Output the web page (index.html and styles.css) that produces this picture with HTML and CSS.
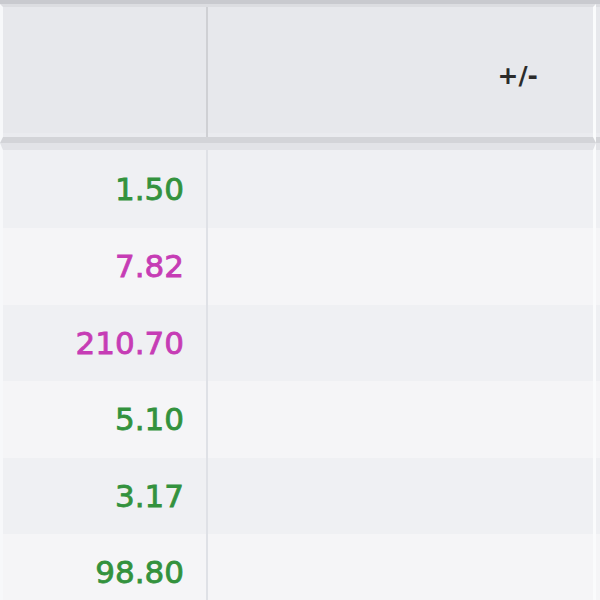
FILE: index.html
```html
<!DOCTYPE html>
<html lang="en">
<head>
    <meta charset="UTF-8">
    <title>Quotes</title>
    <link rel="stylesheet" href="styles.css">
</head>
<body>
    <table class="quotes">
        <colgroup>
            <col class="w-value">
            <col class="w-change">
            <col class="w-rest">
        </colgroup>
        <thead>
            <tr>
                <th class="col-value"></th>
                <th class="col-change">+/-</th>
                <th class="col-rest"></th>
            </tr>
        </thead>
        <tbody>
            <tr>
                <td class="col-value up">1.50</td>
                <td class="col-change"></td>
                <td class="col-rest"></td>
            </tr>
            <tr>
                <td class="col-value down">7.82</td>
                <td class="col-change"></td>
                <td class="col-rest"></td>
            </tr>
            <tr>
                <td class="col-value down">210.70</td>
                <td class="col-change"></td>
                <td class="col-rest"></td>
            </tr>
            <tr>
                <td class="col-value up">5.10</td>
                <td class="col-change"></td>
                <td class="col-rest"></td>
            </tr>
            <tr>
                <td class="col-value up">3.17</td>
                <td class="col-change"></td>
                <td class="col-rest"></td>
            </tr>
            <tr>
                <td class="col-value up">98.80</td>
                <td class="col-change"></td>
                <td class="col-rest"></td>
            </tr>
        </tbody>
    </table>
</body>
</html>
```

FILE: styles.css
```css
:root {
    --header-bg: #e7e8ec;
    --row-odd: #eff0f3;
    --row-even: #f5f5f7;
    --line: #d3d4d8;
    --up-color: #33923d;
    --down-color: #c63cb5;
}

body {
    margin: 0;
    background-color: #f5f5f7;
    font-family: "DejaVu Sans", Verdana, sans-serif;
}

.quotes {
    width: 600px;
    border-collapse: separate;
    border-spacing: 0;
    table-layout: fixed;
    border-top: 4px solid #c9cacf;
}

.w-value {
    width: 208px;
}

.w-change {
    width: 388px;
}

.w-rest {
    width: 4px;
}

.quotes th,
.quotes td {
    box-sizing: border-box;
    padding: 0;
    text-align: right;
    vertical-align: middle;
    white-space: nowrap;
}

.quotes th {
    height: 139px;
    padding-top: 6px;
    background-color: var(--header-bg);
    border-top: 3px solid #dcdde1;
    border-bottom: 6px solid var(--line);
    box-shadow: inset 0 -4px 0 #eaebef;
    font-size: 25px;
    font-weight: bold;
    color: #2b2b2b;
}

.quotes td {
    height: 76.5px;
    font-size: 31px;
    -webkit-text-stroke: 0.8px currentColor;
}

/* light strip under the header line */
.quotes tbody tr:first-child td {
    height: 85px;
    border-top: 7px solid #e2e3e7;
}

.quotes tbody tr:nth-child(odd) td {
    background-color: var(--row-odd);
}

.quotes tbody tr:nth-child(even) td {
    background-color: var(--row-even);
}

.quotes .col-value {
    padding-right: 24px;
    border-left: 3px solid #f7f8fa;
    box-shadow: inset -2px 0 0 #dfe1e6;
}

.quotes th.col-value {
    box-shadow: inset -2px 0 0 #cfd0d4, inset 0 -4px 0 #eaebef;
}

.quotes .col-change {
    padding-right: 55px;
    border-right: 3px solid #fafbfc;
}

.up {
    color: var(--up-color);
}

.down {
    color: var(--down-color);
}
```
